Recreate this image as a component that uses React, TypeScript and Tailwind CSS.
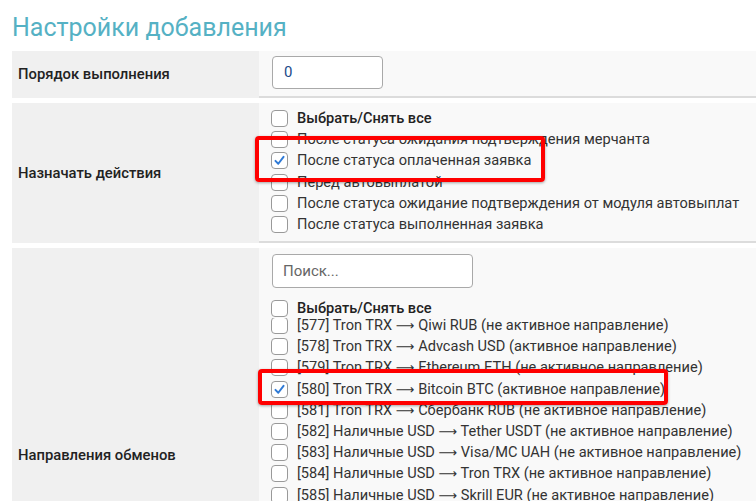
import React from "react";

function Box({ checked = false }: { checked?: boolean }) {
  return (
    <span className="inline-flex h-[17px] w-[17px] shrink-0 items-center justify-center rounded-[4px] border border-[#999] bg-white">
      {checked && (
        <svg viewBox="0 0 16 16" className="h-[13px] w-[13px]">
          <path d="M3 8.5 L6.5 12 L13 3.5" fill="none" stroke="#2f7ad6" strokeWidth="2.4" strokeLinecap="round" strokeLinejoin="round" />
        </svg>
      )}
    </span>
  );
}

// label text with a long arrow glyph in place of "->"
function Label({ text }: { text: string }) {
  const parts = text.split(" -> ");
  if (parts.length < 2) return <>{text}</>;
  return (
    <>
      {parts[0]} <span className="font-['DejaVu_Sans',sans-serif] text-[13px]">⟶</span> {parts[1]}
    </>
  );
}

function Item({ label, checked, bold }: { label: string; checked?: boolean; bold?: boolean }) {
  return (
    <label className="flex h-[21.2px] items-center gap-[9px] whitespace-nowrap">
      <Box checked={checked} />
      <span className={bold ? "font-medium text-[#222]" : "text-[#333]"}>
        <Label text={label} />
      </span>
    </label>
  );
}

const actions = [
  "После статуса ожидания подтверждения мерчанта",
  "После статуса оплаченная заявка",
  "Перед автовыплатой",
  "После статуса ожидание подтверждения от модуля автовыплат",
  "После статуса выполненная заявка",
];

const directions = [
  "[577] Tron TRX -> Qiwi RUB (не активное направление)",
  "[578] Tron TRX -> Advcash USD (активное направление)",
  "[579] Tron TRX -> Ethereum ETH (не активное направление)",
  "[580] Tron TRX -> Bitcoin BTC (активное направление)",
  "[581] Tron TRX -> Сбербанк RUB (не активное направление)",
  "[582] Наличные USD -> Tether USDT (не активное направление)",
  "[583] Наличные USD -> Visa/MC UAH (не активное направление)",
  "[584] Наличные USD -> Tron TRX (не активное направление)",
  "[585] Наличные USD -> Skrill EUR (не активное направление)",
  "[586] Наличные USD -> Perfect Money USD (не активное направление)",
  "[587] Наличные USD -> Payeer USD (не активное направление)",
];

export default function App() {
  return (
    <div className="h-[501px] overflow-hidden bg-white pl-[12px] font-['Roboto',sans-serif] text-[14.6px] leading-[21px]">
      {/* Title */}
      <h2 className="flex h-[51px] items-center pt-[4px] text-[25px] leading-[30px] font-normal text-[#55b1c4]">
        Настройки добавления
      </h2>

      <div className="flex flex-col gap-[5px]">
        {/* Порядок выполнения */}
        <div className="flex h-[47px]">
          <div className="flex w-[247px] shrink-0 items-center bg-[#f0f0f0] pl-[6px] text-[14.8px] font-medium text-[#222]">
            Порядок выполнения
          </div>
          <div className="flex-1 border-b-2 border-[#dcdcdc] bg-[#f9f9f9] pl-[13px] pt-[5px]">
            <div className="flex h-[33px] w-[111px] items-center rounded-[4px] border border-[#a9a9a9] bg-white px-[11px] text-[15px] text-[#1a4a8a]">
              0
            </div>
          </div>
        </div>

        {/* Назначать действия */}
        <div className="flex h-[140px]">
          <div className="flex w-[247px] shrink-0 items-center bg-[#f0f0f0] pl-[6px] text-[14.8px] font-medium text-[#222]">
            Назначать действия
          </div>
          <div className="relative flex-1 border-b-2 border-[#dcdcdc] bg-[#f9f9f9] pl-[12px] pt-[5px]">
            <Item label="Выбрать/Снять все" bold />
            {actions.map((a, i) => (
              <Item key={a} label={a} checked={i === 1} />
            ))}
            <div className="absolute left-[-4px] top-[33px] h-[46px] w-[290px] rounded-[4px] border-[4px] border-[#ff0000] shadow-[0_1px_3px_rgba(0,0,0,0.35)]" />
          </div>
        </div>

        {/* Направления обменов */}
        <div className="flex h-[414px]">
          <div className="flex w-[247px] shrink-0 items-center bg-[#f0f0f0] pl-[6px] text-[14.8px] font-medium text-[#222]">
            Направления обменов
          </div>
          <div className="relative flex-1 bg-[#f9f9f9] pl-[12px] pt-[6px]">
            <div className="ml-[1px] flex h-[34px] w-[201px] items-center rounded-[4px] border border-[#a9a9a9] bg-white px-[10px] text-[15px] text-[#666]">
              Поиск...
            </div>
            <div className="mt-[10px] h-[20px]">
              <Item label="Выбрать/Снять все" bold />
            </div>
            <div className="h-[360px] overflow-hidden">
              <div className="-mt-[3px]">
                {directions.map((d, i) => (
                  <Item key={d} label={d} checked={i === 3} />
                ))}
              </div>
            </div>
            <div className="absolute left-[-1px] top-[121px] h-[36px] w-[410px] rounded-[4px] border-[4px] border-[#ff0000] shadow-[0_1px_3px_rgba(0,0,0,0.35)]" />
          </div>
        </div>
      </div>
    </div>
  );
}
